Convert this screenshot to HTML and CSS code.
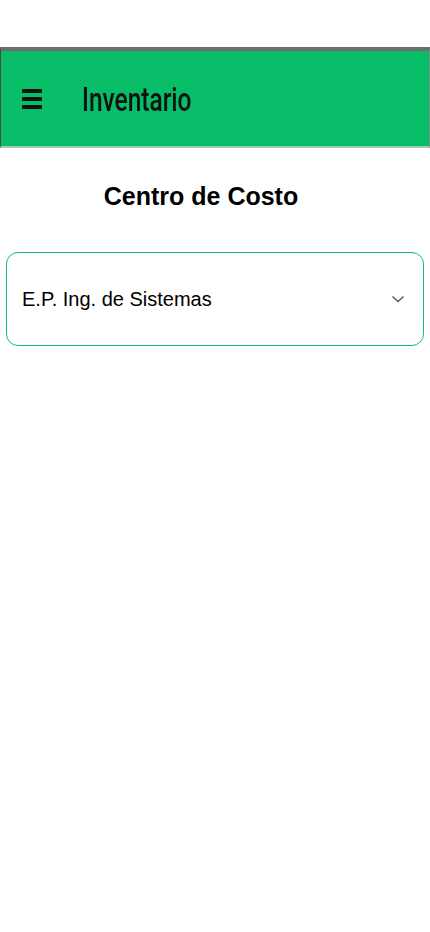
FILE: index.html
```html
<!DOCTYPE html>
<html lang="es">
<head>
<meta charset="utf-8">
<title>Inventario</title>
<link rel="stylesheet" href="styles.css">
</head>
<body>
<div class="top-space"></div>
<header class="appbar">
  <div class="menu-icon"><span></span><span></span><span></span></div>
  <div class="appbar-title">Inventario</div>
</header>
<main class="content">
  <h1 class="page-title">Centro de Costo</h1>
  <div class="select">
    <span class="select-value">E.P. Ing. de Sistemas</span>
    <svg class="chevron" width="14" height="8" viewBox="0 0 14 8"><path d="M1.5 1.5 L7 6.5 L12.5 1.5" fill="none" stroke="#5a5a5a" stroke-width="1.5"/></svg>
  </div>
</main>
</body>
</html>
```
FILE: styles.css
```css
html, body {
  margin: 0;
  padding: 0;
  background: #ffffff;
  font-family: "Liberation Sans", Arial, sans-serif;
  color: #000;
}
.top-space {
  height: 47px;
}
.appbar {
  height: 95px;
  background: #07bd67;
  border-top: 4px solid #6d6d6d;
  border-bottom: 2px solid #9fc9b2;
  border-left: 1px solid #4a4a4a;
  border-right: 1px solid #8a8a8a;
  display: flex;
  align-items: center;
  box-sizing: content-box;
}
.menu-icon {
  display: flex;
  flex-direction: column;
  gap: 4px;
  margin-left: 21px;
  width: 20px;
}
.menu-icon span {
  display: block;
  height: 4px;
  background: #111;
  border-radius: 1px;
}
.appbar-title {
  margin-left: 40px;
  font-family: Roboto, "Noto Sans", sans-serif;
  font-size: 34px;
  font-weight: 500;
  color: #111;
  transform: scaleX(0.72);
  transform-origin: left center;
  filter: blur(0.4px);
}
.content {
  padding: 0 6px 0 6px;
}
.page-title {
  margin: 33px 28px 0 0;
  font-size: 25px;
  font-weight: bold;
  text-align: center;
  line-height: 30px;
}
.select {
  margin-top: 41px;
  height: 92px;
  border: 1px solid #13bf6c;
  border-radius: 12px;
  display: flex;
  align-items: center;
  justify-content: space-between;
  padding: 0 18px 0 15px;
}
.select-value {
  font-size: 20px;
  line-height: 24px;
}
.chevron {
  display: block;
}
```
